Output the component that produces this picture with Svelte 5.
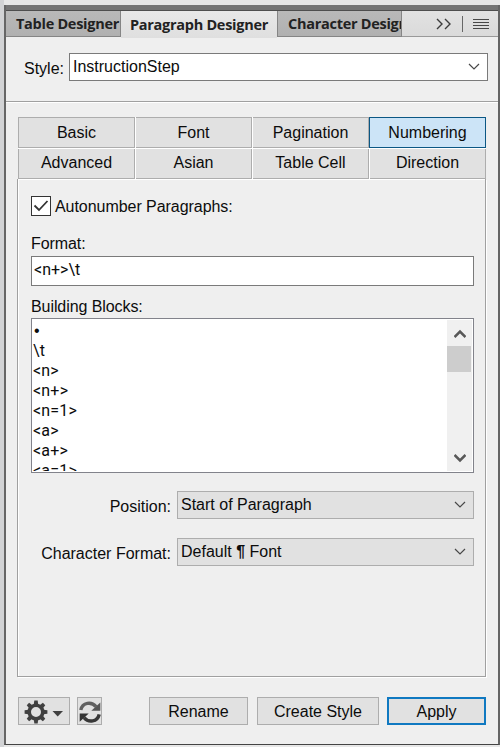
<script>
	const tabs = ['Table Designer', 'Paragraph Designer', 'Character Designer'];
	const categories = [
		'Basic', 'Font', 'Pagination', 'Numbering',
		'Advanced', 'Asian', 'Table Cell', 'Direction'
	];
	const blocks = ['•', '\\t', '<n>', '<n+>', '<n=1>', '<a>', '<a+>', '<a=1>'];
	const teeth = [0, 45, 90, 135, 180, 225, 270, 315];

	let activeTab = $state(1);
	let activeCategory = $state(3);
	let autonumber = $state(true);
	let format = $state('<n+>\\t');
</script>

{#snippet chevron()}
	<svg class="chevron" width="12" height="8" viewBox="0 0 12 8">
		<path d="M1 1 L6 6 L11 1" fill="none" stroke="#484848" stroke-width="1.2" />
	</svg>
{/snippet}

<div class="window">
	<div class="panel">
		<div class="titlebar"></div>
		<div class="tabs">
			{#each tabs as tab, i}
				<button class="tab tab-{i}" class:active={activeTab === i} onclick={() => (activeTab = i)}>
					{tab}
				</button>
			{/each}
			<div class="tab-tools">
				<svg width="16" height="12" viewBox="0 0 16 12">
					<path d="M1 1 L6 6 L1 11 M9 1 L14 6 L9 11" fill="none" stroke="#3c3c3c" stroke-width="1.4" />
				</svg>
				<span class="separator"></span>
				<svg width="16" height="12" viewBox="0 0 16 12">
					<path d="M0 1.5 H16 M0 4.5 H16 M0 7.5 H16 M0 10.5 H16" stroke="#484848" stroke-width="1.2" />
				</svg>
			</div>
		</div>

		<div class="style-row">
			<span class="style-label">Style:</span>
			<div class="combo"><span>InstructionStep</span> {@render chevron()}</div>
		</div>

		<div class="categories">
			{#each categories as category, i}
				<button
					class="category"
					class:first={i < 4}
					class:selected={activeCategory === i}
					onclick={() => (activeCategory = i)}
				>{category}</button>
			{/each}
		</div>

		<div class="page">
			<label class="check">
				<input type="checkbox" bind:checked={autonumber} />
				<span class="box">
					{#if autonumber}
						<svg width="16" height="14" viewBox="0 0 16 14">
							<path d="M1.5 6.5 L6 11 L14.5 2" fill="none" stroke="#333" stroke-width="1.8" />
						</svg>
					{/if}
				</span>
				<span class="check-text">Autonumber Paragraphs:</span>
			</label>

			<label class="caption" for="format">Format:</label>
			<input id="format" class="format" type="text" bind:value={format} />

			<div class="caption blocks-caption">Building Blocks:</div>
			<div class="list">
				<ul>
					{#each blocks as block}
						<li class:bullet={block === '•'}>{block}</li>
					{/each}
				</ul>
				<div class="scrollbar">
					<svg width="12" height="10" viewBox="0 0 12 10">
						<path d="M.5 8 L6 2.5 L11.5 8" fill="none" stroke="#585858" stroke-width="2.6" />
					</svg>
					<div class="thumb"></div>
					<svg class="down" width="12" height="10" viewBox="0 0 12 10">
						<path d="M.5 2 L6 7.5 L11.5 2" fill="none" stroke="#585858" stroke-width="2.6" />
					</svg>
				</div>
			</div>

			<div class="field">
				<span>Position:</span>
				<div class="select"><span>Start of Paragraph</span> {@render chevron()}</div>
			</div>
			<div class="field">
				<span>Character Format:</span>
				<div class="select"><span>Default <i>¶</i> Font</span> {@render chevron()}</div>
			</div>
		</div>

		<div class="footer">
			<button class="btn gear" aria-label="Options">
				<svg width="46" height="26" viewBox="0 0 46 26">
					<circle cx="15" cy="13" r="6.8" fill="none" stroke="#404040" stroke-width="3.6" />
					{#each teeth as angle}
						<path d="M12.7 6 L13.3 1.6 H16.7 L17.3 6 Z" fill="#404040" transform="rotate({angle} 15 13)" />
					{/each}
					<path d="M31.5 12 H42 L36.7 17.6 Z" fill="#404040" />
				</svg>
			</button>
			<button class="btn refresh" aria-label="Refresh">
				<svg width="22" height="24" viewBox="0 0 22 24">
					<g fill="none" stroke-width="3.4">
						<path d="M1.8 10 C3.5 2.2 12.5 1.2 17 6.6" stroke="#606060" />
						<path d="M20.2 14.3 C18.5 22 9.5 23 5 17.6" stroke="#383838" />
					</g>
					<path d="M21.3 2.4 V10.8 H12.3 Z" fill="#555" />
					<path d="M.7 21.8 V13.4 H9.7 Z" fill="#333" />
				</svg>
			</button>
			<button class="btn rename">Rename</button>
			<button class="btn create">Create Style</button>
			<button class="btn apply">Apply</button>
		</div>
	</div>
</div>

<style>
	:global(body) {
		margin: 0;
	}

	.window {
		box-sizing: border-box;
		width: 500px;
		height: 747px;
		padding: 5px 0 2px 4px;
		overflow: hidden;
		background: linear-gradient(90deg, #d2d3d5 4px, #e7e7e7 4px);
		color: #0c0c0c;
		font: 16px/20px "Liberation Sans", Arial, sans-serif;
	}

	.window * {
		box-sizing: border-box;
	}

	button,
	input {
		margin: 0;
		padding: 0;
		border-radius: 0;
		color: inherit;
		font: inherit;
	}

	svg {
		display: block;
		flex: none;
	}

	.panel {
		display: flex;
		flex-direction: column;
		height: 740px;
		border-left: 2px solid #666;
		border-right: 2px solid #656565;
		border-bottom: 1px solid #444;
		background: #efefef;
	}

	.titlebar {
		flex: none;
		height: 6px;
		background: #757575;
		border-bottom: 1px solid #4e4e4e;
	}

	.tabs {
		display: flex;
		flex: none;
		height: 27px;
	}

	.tab {
		height: 26px;
		overflow: hidden;
		border: 0;
		border-bottom: 1px solid #858585;
		background: linear-gradient(#b9b9b9, #b0b0b0);
		color: #222;
		font: bold 14.5px/24px "Open Sans", "Noto Sans", sans-serif;
		letter-spacing: -0.28px;
		text-align: left;
		white-space: nowrap;
	}

	.tab-0 {
		width: 115px;
		padding-left: 10px;
		border-right: 1px solid #858585;
	}

	.tab-1 {
		width: 156px;
		padding-left: 9px;
	}

	.tab-2 {
		width: 125px;
		padding-left: 10px;
		border-left: 1px solid #858585;
		border-right: 1px solid #858585;
	}

	.tab.active {
		height: 27px;
		border-bottom: 0;
		background: linear-gradient(#e8e8e8, #dfdfdf);
	}

	.tab-tools {
		display: flex;
		flex: 1;
		align-items: center;
		height: 26px;
		padding-left: 34px;
		border-bottom: 1px solid #999;
		background: linear-gradient(#e2e2e2, #dadada);
	}

	.separator {
		width: 1px;
		height: 16px;
		margin: 0 10px;
		background: #666;
	}

	.style-row {
		display: flex;
		flex: none;
		height: 65px;
		padding: 15px 0 0 18px;
		border-bottom: 1px solid #fff;
		box-shadow: inset 0 -1px #a0a0a0;
	}

	.style-label {
		width: 45px;
		padding-top: 6px;
	}

	.combo,
	.select {
		display: flex;
		align-items: center;
		justify-content: space-between;
		height: 28px;
		padding: 0 7px 0 3px;
		border: 1px solid #7a7a7a;
		background: #fff;
	}

	.combo {
		width: 419px;
	}

	.chevron {
		margin-bottom: 1px;
	}

	.categories {
		display: grid;
		flex: none;
		grid-template-columns: 118px 117px 117px 116px;
		grid-template-rows: 31px 30px;
		row-gap: 1px;
		margin: 14px 0 0 12px;
		background: #fff;
		width: 468px;
	}

	.category {
		margin-right: 1px;
		padding-bottom: 2px;
		border: solid #adadad;
		border-width: 0 1px 1px 0;
		background: #e1e1e1;
	}

	.category.first {
		padding-bottom: 0;
		border-top-width: 1px;
	}

	.category:nth-child(4n + 1) {
		border-left-width: 1px;
	}

	.category:nth-child(4n) {
		margin-right: 0;
	}

	.category.selected {
		margin-left: -1px;
		border: 1px solid #0b5784;
		background: #cce4f7;
	}

	.page {
		flex: none;
		width: 469px;
		height: 498px;
		margin-left: 11px;
		padding: 17px 0 0 13px;
		border: solid #a0a0a0;
		border-width: 0 1px 1px;
		box-shadow: inset 1px 1px #fff, 1px 1px #fff;
	}

	.check {
		display: flex;
		height: 20px;
	}

	.check input {
		display: none;
	}

	.box {
		display: flex;
		align-items: center;
		justify-content: center;
		width: 20px;
		height: 20px;
		margin-right: 4px;
		border: 1px solid #333;
		background: #fff;
	}

	.check-text {
		padding-top: 1px;
		letter-spacing: -0.05px;
	}

	.caption {
		display: block;
		height: 20px;
		margin-top: 18px;
		letter-spacing: -0.08px;
	}

	.format {
		display: block;
		width: 443px;
		height: 30px;
		margin-top: 2px;
		padding: 0 2px 4px;
		border: 1px solid #7a7a7a;
		background: #fff;
		font-family: Roboto, sans-serif;
		outline: none;
	}

	.blocks-caption {
		margin-top: 11px;
	}

	.list {
		display: flex;
		justify-content: space-between;
		width: 443px;
		height: 155px;
		margin-top: 1px;
		padding: 1px;
		border: 1px solid #82838b;
		background: #fff;
	}

	ul {
		height: 151px;
		margin: 0;
		padding: 1px 0 0;
		overflow: hidden;
		font-family: Roboto, sans-serif;
		letter-spacing: 0.2px;
		list-style: none;
	}

	li {
		height: 20px;
	}

	.bullet {
		padding-left: 1px;
		font-family: "Liberation Sans", Arial, sans-serif;
		line-height: 19px;
	}

	.scrollbar {
		display: flex;
		flex-direction: column;
		align-items: center;
		width: 25px;
		padding-top: 9px;
		background: #f0f0f0;
	}

	.thumb {
		align-self: flex-start;
		width: 24px;
		height: 26px;
		margin-top: 7px;
		background: #cdcdcd;
	}

	.down {
		margin: auto 0 8px;
	}

	.field {
		display: flex;
		justify-content: flex-end;
		width: 443px;
		height: 28px;
		margin-top: 19px;
	}

	.list + .field {
		margin-top: 18px;
	}

	.field > span {
		padding: 6px 6px 0 0;
	}

	.select {
		width: 297px;
		border-color: #adadad;
		background: #e1e1e1;
	}

	.select span {
		line-height: 18px;
	}

	.select i {
		font-family: "Liberation Sans", Arial, sans-serif;
		font-style: normal;
		font-weight: bold;
	}

	.footer {
		display: flex;
		padding: 20px 0 0 12px;
	}

	.btn {
		display: flex;
		align-items: center;
		justify-content: center;
		height: 28px;
		padding-top: 1px;
		border: 1px solid #adadad;
		background: #e1e1e1;
	}

	.gear {
		width: 52px;
	}

	.refresh {
		width: 25px;
		margin-left: 7px;
	}

	.rename {
		width: 99px;
		margin-left: 47px;
	}

	.create {
		width: 122px;
		margin-left: 9px;
	}

	.apply {
		width: 99px;
		margin-left: 8px;
		border: 2px solid #1079c1;
	}
</style>
